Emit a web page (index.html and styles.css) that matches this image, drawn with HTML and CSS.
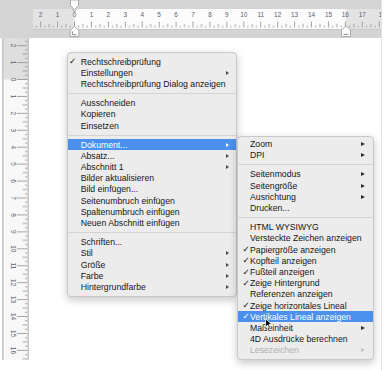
FILE: index.html
```html
<!DOCTYPE html>
<html>
<head>
    <meta charset="UTF-8">
    <title>Dokument - Kontextmenü</title>
    <link rel="stylesheet" href="styles.css">
</head>
<body>
<div class="app">
    <div class="doc">
        <div class="band">
            <svg class="hruler" width="381" height="37.5" viewBox="0 0 381 37.5">
                <defs>
                    <pattern id="hticks" x="74" y="9" width="16.93" height="20" patternUnits="userSpaceOnUse">
                        <path d="M0.5 12.5V18.5M8.97 14.8V18.5M4.73 16.6V18.5M13.2 16.6V18.5" stroke="#8e8e8e" stroke-width="0.8"/>
                    </pattern>
                </defs>
                <rect x="33" y="9" width="348" height="20" fill="#e3e3e3"/>
                <rect x="74.5" y="9" width="271" height="20" fill="#fcfcfc"/>
                <rect x="33" y="9" width="348" height="20" fill="url(#hticks)"/>
                <path d="M33 29.4H381" stroke="#c4c4c4" stroke-width="0.8"/>
                <g class="rnum" text-anchor="middle">
                    <text x="40.64" y="17.4">2</text>
                    <text x="57.57" y="17.4">1</text>
                    <text x="74.5" y="17.4">0</text>
                    <text x="91.43" y="17.4">1</text>
                    <text x="108.36" y="17.4">2</text>
                    <text x="125.29" y="17.4">3</text>
                    <text x="142.22" y="17.4">4</text>
                    <text x="159.15" y="17.4">5</text>
                    <text x="176.08" y="17.4">6</text>
                    <text x="193.01" y="17.4">7</text>
                    <text x="209.94" y="17.4">8</text>
                    <text x="226.87" y="17.4">9</text>
                    <text x="243.8" y="17.4">10</text>
                    <text x="260.73" y="17.4">11</text>
                    <text x="277.66" y="17.4">12</text>
                    <text x="294.59" y="17.4">13</text>
                    <text x="311.52" y="17.4">14</text>
                    <text x="328.45" y="17.4">15</text>
                    <text x="345.38" y="17.4">16</text>
                    <text x="362.31" y="17.4">17</text>
                    <text x="378.8" y="17.4" text-anchor="start">1</text>
                </g>
                <!-- indent markers -->
                <polygon points="70.5,0 78.5,0 78.5,5.5 74.5,9.5 70.5,5.5" fill="#fff" stroke="#9a9a9a" stroke-width="0.8"/>
                <path d="M72.6 9.4L74.5 12L76.4 9.4" fill="none" stroke="#8a8a8a" stroke-width="0.8"/>
                <polygon points="74.5,26.5 78.8,30.5 78.8,36.5 70.2,36.5 70.2,30.5" fill="#fff" stroke="#9a9a9a" stroke-width="0.8"/>
                <path d="M72.4 31.4V34.7H76.6" fill="none" stroke="#6e6e6e" stroke-width="0.8"/>
                <polygon points="346,26 350.5,30 350.5,36.5 341.5,36.5 341.5,30" fill="#fff" stroke="#9a9a9a" stroke-width="0.8"/>
                <path d="M343.5 34.3H348.5" stroke="#6e6e6e" stroke-width="0.8"/>
            </svg>
        </div>
        <div class="doc-body">
            <div class="vcol">
                <svg class="vruler" width="27" height="322" viewBox="0 0 27 322">
                    <defs>
                        <pattern id="vticks" x="0" y="41" width="27" height="16.93" patternUnits="userSpaceOnUse">
                            <path d="M15 0.5H25.5M20.5 8.97H25.5M23 4.73H25.5M23 13.2H25.5" stroke="#8e8e8e" stroke-width="0.8"/>
                        </pattern>
                    </defs>
                    <rect x="0" y="0" width="27" height="322" fill="#f8f8f8"/>
                    <rect x="0" y="0" width="27" height="41.5" fill="#dedede"/>
                    <rect x="0" y="0" width="27" height="322" fill="url(#vticks)"/>
                    <path d="M0.8 0V322M26.2 0V322" stroke="#c6c6c6" stroke-width="1.6"/>
                    <g class="rnum" text-anchor="middle">
                        <text transform="translate(9,7.64) rotate(90)">2</text>
                        <text transform="translate(9,24.57) rotate(90)">1</text>
                        <text transform="translate(9,41.5) rotate(90)">0</text>
                        <text transform="translate(9,58.43) rotate(90)">1</text>
                        <text transform="translate(9,75.36) rotate(90)">2</text>
                        <text transform="translate(9,92.29) rotate(90)">3</text>
                        <text transform="translate(9,109.22) rotate(90)">4</text>
                        <text transform="translate(9,126.15) rotate(90)">5</text>
                        <text transform="translate(9,143.08) rotate(90)">6</text>
                        <text transform="translate(9,160.01) rotate(90)">7</text>
                        <text transform="translate(9,176.94) rotate(90)">8</text>
                        <text transform="translate(9,193.87) rotate(90)">9</text>
                        <text transform="translate(9,210.8) rotate(90)">10</text>
                        <text transform="translate(9,227.73) rotate(90)">11</text>
                        <text transform="translate(9,244.66) rotate(90)">12</text>
                        <text transform="translate(9,261.59) rotate(90)">13</text>
                        <text transform="translate(9,278.52) rotate(90)">14</text>
                        <text transform="translate(9,295.45) rotate(90)">15</text>
                        <text transform="translate(9,312.38) rotate(90)">16</text>
                    </g>
                </svg>
            </div>
            <div class="page"></div>
        </div>
    </div>
    <div class="edge"></div>

    <!-- context menu -->
    <div class="menu main-menu">
        <div class="item"><span class="check">✓</span><span>Rechtschreibprüfung</span></div>
        <div class="item"><span class="check"></span><span>Einstellungen</span><i class="arrow"></i></div>
        <div class="item"><span class="check"></span><span>Rechtschreibprüfung Dialog anzeigen</span></div>
        <div class="sep"></div>
        <div class="item"><span class="check"></span><span>Ausschneiden</span></div>
        <div class="item"><span class="check"></span><span>Kopieren</span></div>
        <div class="item"><span class="check"></span><span>Einsetzen</span></div>
        <div class="sep"></div>
        <div class="item active"><span class="check"></span><span>Dokument...</span><i class="arrow"></i></div>
        <div class="item"><span class="check"></span><span>Absatz...</span><i class="arrow"></i></div>
        <div class="item"><span class="check"></span><span>Abschnitt 1</span><i class="arrow"></i></div>
        <div class="item"><span class="check"></span><span>Bilder aktualisieren</span></div>
        <div class="item"><span class="check"></span><span>Bild einfügen...</span></div>
        <div class="item"><span class="check"></span><span>Seitenumbruch einfügen</span></div>
        <div class="item"><span class="check"></span><span>Spaltenumbruch einfügen</span></div>
        <div class="item"><span class="check"></span><span>Neuen Abschnitt einfügen</span></div>
        <div class="sep"></div>
        <div class="item"><span class="check"></span><span>Schriften...</span></div>
        <div class="item"><span class="check"></span><span>Stil</span><i class="arrow"></i></div>
        <div class="item"><span class="check"></span><span>Größe</span><i class="arrow"></i></div>
        <div class="item"><span class="check"></span><span>Farbe</span><i class="arrow"></i></div>
        <div class="item"><span class="check"></span><span>Hintergrundfarbe</span><i class="arrow"></i></div>
    </div>

    <!-- Dokument submenu -->
    <div class="menu sub-menu">
        <div class="item"><span class="check"></span><span>Zoom</span><i class="arrow"></i></div>
        <div class="item"><span class="check"></span><span>DPI</span><i class="arrow"></i></div>
        <div class="sep"></div>
        <div class="item"><span class="check"></span><span>Seitenmodus</span><i class="arrow"></i></div>
        <div class="item"><span class="check"></span><span>Seitengröße</span><i class="arrow"></i></div>
        <div class="item"><span class="check"></span><span>Ausrichtung</span><i class="arrow"></i></div>
        <div class="item"><span class="check"></span><span>Drucken...</span></div>
        <div class="sep"></div>
        <div class="item"><span class="check"></span><span>HTML WYSIWYG</span></div>
        <div class="item"><span class="check"></span><span>Versteckte Zeichen anzeigen</span></div>
        <div class="item"><span class="check">✓</span><span>Papiergröße anzeigen</span></div>
        <div class="item"><span class="check">✓</span><span>Kopfteil anzeigen</span></div>
        <div class="item"><span class="check">✓</span><span>Fußteil anzeigen</span></div>
        <div class="item"><span class="check">✓</span><span>Zeige Hintergrund</span></div>
        <div class="item"><span class="check"></span><span>Referenzen anzeigen</span></div>
        <div class="item"><span class="check">✓</span><span>Zeige horizontales Lineal</span></div>
        <div class="item active"><span class="check">✓</span><span>Vertikales Lineal anzeigen</span></div>
        <div class="item"><span class="check"></span><span>Maßeinheit</span><i class="arrow"></i></div>
        <div class="item"><span class="check"></span><span>4D Ausdrücke berechnen</span></div>
        <div class="item off"><span class="check"></span><span>Lesezeichen</span><i class="arrow"></i></div>
    </div>

    <svg class="cursor" viewBox="0 0 12 18">
        <path d="M1 1V15L4.5 11.5L7 17L9.3 16L6.8 10.5H11.5Z" fill="#000" stroke="#fff" stroke-width="1.3" stroke-linejoin="round"/>
    </svg>
</div>
</body>
</html>
```

FILE: styles.css
```css
* { margin: 0; padding: 0; box-sizing: border-box; }
body {
    background: #fff;
    overflow: hidden;
    font-family: "Liberation Sans", Arial, sans-serif;
}
.app {
    position: relative;
    display: flex;
    width: 390px;
    height: 370px;
}
.doc {
    width: 381px;
    display: flex;
    flex-direction: column;
}
.band {
    height: 37.5px;
    background: #d4d4d4;
}
svg { display: block; }
.rnum text {
    font-family: "Liberation Sans", Arial, sans-serif;
    font-size: 6.4px;
    fill: #56606f;
}
.doc-body {
    flex: 1;
    display: flex;
}
.vcol {
    width: 33px;
    padding: 0.5px 4px 0 2px;
}
.page {
    flex: 1;
    background: #fff;
}
.edge {
    flex: 1;
    border-left: 1px solid #e2e2e2;
}

/* menus */
.menu {
    position: absolute;
    background: #ececec;
    border: 1px solid #c8c8c8;
    border-radius: 4px;
    padding: 3px 0;
    box-shadow: 0 3px 8px rgba(0, 0, 0, 0.22);
    font-size: 8.7px;
    color: #161616;
}
.main-menu {
    left: 67px;
    top: 52px;
    width: 170px;
}
.sub-menu {
    left: 236.5px;
    top: 135.5px;
    width: 137px;
    padding-top: 2px;
}
.item {
    height: 11.2px;
    display: flex;
    align-items: center;
    white-space: nowrap;
    padding-right: 7px;
}
.item span:nth-child(2) { flex: 1; }
.check {
    width: 12.7px;
    padding-left: 1px;
    font-family: "DejaVu Sans", sans-serif;
    font-size: 8.6px;
    line-height: 1;
}
.sub-menu .check {
    padding-left: 5px;
    width: 12.5px;
}
.arrow {
    width: 0;
    height: 0;
    border-left: 3.6px solid #4a4a4a;
    border-top: 2.3px solid transparent;
    border-bottom: 2.3px solid transparent;
}
.sub-menu .item { padding-right: 7.5px; }
.sub-menu .arrow {
    border-left: 4.4px solid #2e2e2e;
    border-top: 2.8px solid transparent;
    border-bottom: 2.8px solid transparent;
}
.item.active {
    background: #4a90ec;
    color: #fff;
}
.item.active .arrow { border-left-color: #fff; }
.item.off { color: #b0b0b0; }
.item.off .arrow { border-left-color: #c2c2c2; }
.sep {
    height: 1px;
    background: #d3d3d3;
    margin: 3.5px 0;
}
.cursor {
    position: absolute;
    left: 264.5px;
    top: 318px;
    width: 7px;
    height: 11px;
}
```
